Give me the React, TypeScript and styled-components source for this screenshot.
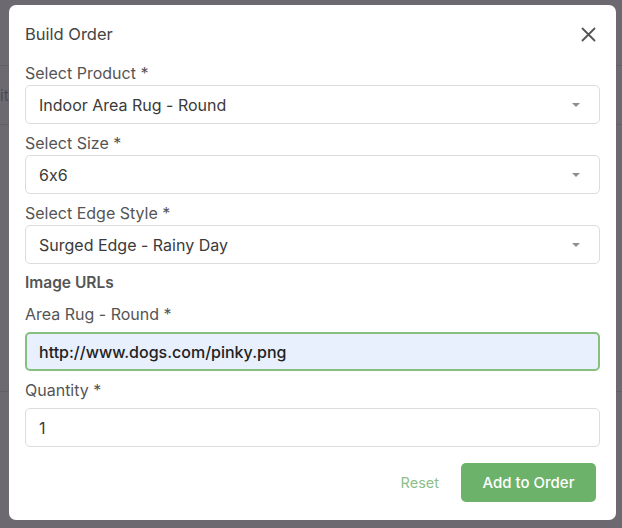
import styled, { createGlobalStyle } from 'styled-components';

const GlobalStyle = createGlobalStyle`
    html, body {
        margin: 0;
        padding: 0;
        background: #6c6970;
        font-family: Inter, "Noto Sans", sans-serif;
        font-feature-settings: "calt" 0;
    }
`;

// Dimmed page behind the dialog
const Backdrop = styled.div`
    position: relative;
    width: 622px;
    height: 528px;
    overflow: hidden;
    background: #6c6970;
`;

const PageRows = styled.div`
    display: flex;
    flex-direction: column;
`;

const PageRow = styled.div<{ $h: number }>`
    height: ${p => p.$h}px;
    border-bottom: 1px solid #625f66;
    display: flex;
    align-items: center;
    color: #4c4a50;
    font-size: 15px;
`;

const Modal = styled.div`
    position: absolute;
    top: 5px;
    left: 9px;
    width: 607px;
    height: 515px;
    box-sizing: border-box;
    background: #fff;
    border-radius: 7px;
    padding: 20px 16px 0 16px;
    display: flex;
    flex-direction: column;
`;

const Header = styled.div`
    display: flex;
    align-items: center;
    justify-content: space-between;
    height: 18px;
    margin-bottom: 20px;
`;

const Title = styled.h2`
    margin: 0;
    font-size: 16.5px;
    font-weight: 400;
    color: #444;
`;

const CloseButton = styled.button`
    border: none;
    background: none;
    padding: 0;
    margin-right: 3px;
    width: 18px;
    height: 18px;
    display: flex;
    align-items: center;
    justify-content: center;
    color: #555;
`;

const Field = styled.div<{ $gap: number }>`
    display: flex;
    flex-direction: column;
    gap: ${p => p.$gap}px;
    margin-bottom: 9px;
`;

const Label = styled.label`
    font-size: 16px;
    line-height: 20px;
    color: #555;
`;

const SectionTitle = styled.div`
    font-size: 15.5px;
    font-weight: 600;
    line-height: 20px;
    color: #555;
    margin-bottom: 11px;
`;

const Box = styled.div<{ $active?: boolean }>`
    height: 39px;
    box-sizing: border-box;
    border: ${p => (p.$active ? '2px solid #86bf7e' : '1px solid #dcdcdc')};
    background: ${p => (p.$active ? '#e8effd' : '#fff')};
    border-radius: 5px;
    padding: 0 ${p => (p.$active ? 12 : 13)}px;
    display: flex;
    align-items: center;
    justify-content: space-between;
    font-size: 16px;
    color: ${p => (p.$active ? '#222' : '#3a3a3a')};
    font-weight: ${p => (p.$active ? 500 : 400)};
`;

const Caret = styled.span`
    width: 0;
    height: 0;
    border-left: 4.5px solid transparent;
    border-right: 4.5px solid transparent;
    border-top: 4.5px solid #8f8f8f;
    margin-right: 6px;
`;

const Footer = styled.div`
    display: flex;
    justify-content: flex-end;
    align-items: center;
    gap: 22px;
    margin-top: 7px;
    padding-right: 4px;
`;

const ResetButton = styled.button`
    border: none;
    background: none;
    font-family: inherit;
    font-size: 14.5px;
    color: #8cbf88;
    padding: 0;
`;

const PrimaryButton = styled.button`
    border: none;
    background: #6db26a;
    color: #fff;
    font-family: inherit;
    font-size: 15px;
    font-weight: 500;
    height: 39px;
    width: 135px;
    border-radius: 5px;
`;

function SelectField({ label, value }: { label: string; value: string }) {
    return (
        <Field $gap={2}>
            <Label>{label}</Label>
            <Box>
                <span>{value}</span>
                <Caret />
            </Box>
        </Field>
    );
}

export default function App() {
    return (
        <>
            <GlobalStyle />
            <Backdrop>
                <PageRows>
                    <PageRow $h={65} />
                    <PageRow $h={58}>it</PageRow>
                    <PageRow $h={266} />
                    <PageRow $h={139} />
                </PageRows>
                <Modal>
                    <Header>
                        <Title>Build Order</Title>
                        <CloseButton aria-label="Close">
                            <svg width="15" height="15" viewBox="0 0 15 15" fill="none" stroke="currentColor" strokeWidth="1.8" strokeLinecap="round">
                                <path d="M1.5 1.5 L13.5 13.5 M13.5 1.5 L1.5 13.5" />
                            </svg>
                        </CloseButton>
                    </Header>
                    <SelectField label="Select Product *" value="Indoor Area Rug - Round" />
                    <SelectField label="Select Size *" value="6x6" />
                    <SelectField label="Select Edge Style *" value="Surged Edge - Rainy Day" />
                    <SectionTitle>Image URLs</SectionTitle>
                    <Field $gap={8}>
                        <Label>Area Rug - Round *</Label>
                        <Box $active>http://www.dogs.com/pinky.png</Box>
                    </Field>
                    <Field $gap={8}>
                        <Label>Quantity *</Label>
                        <Box>1</Box>
                    </Field>
                    <Footer>
                        <ResetButton>Reset</ResetButton>
                        <PrimaryButton>Add to Order</PrimaryButton>
                    </Footer>
                </Modal>
            </Backdrop>
        </>
    );
}
